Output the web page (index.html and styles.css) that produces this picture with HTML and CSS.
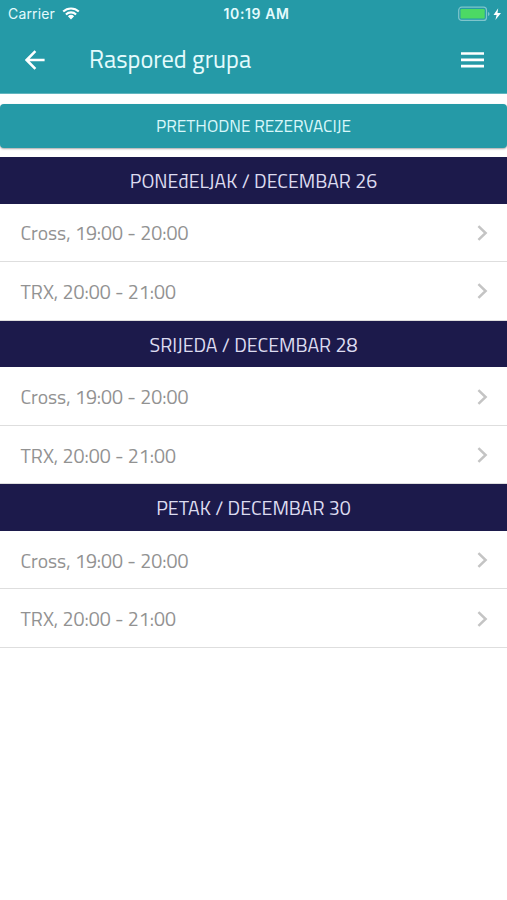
FILE: index.html
```html
<!DOCTYPE html>
<html lang="bs">
<head>
    <meta charset="UTF-8">
    <meta name="viewport" content="width=device-width, initial-scale=1.0">
    <title>Raspored grupa</title>
    <link rel="stylesheet" href="styles.css">
</head>
<body>
    <header>
        <div class="status">
            <div class="carrier">
                <span class="carrier-name">Carrier</span>
                <svg class="wifi" width="18" height="13" viewBox="0 0 18 13">
                    <path d="M1.2 4.6a11.3 11.3 0 0 1 15.6 0M3.9 7.4a7.4 7.4 0 0 1 10.2 0" fill="none" stroke="#fff" stroke-width="2.1"/>
                    <path d="M5.9 9.3a4.5 4.5 0 0 1 6.2 0L9 12.5z" fill="#fff"/>
                </svg>
            </div>
            <span class="time">10:19 AM</span>
            <svg class="battery" width="44" height="16" viewBox="0 0 44 16">
                <rect x="0.7" y="1.2" width="27.8" height="13.2" rx="3" fill="none" stroke="#7fc5cc" stroke-width="1.2"/>
                <rect x="2.5" y="3" width="24.2" height="9.6" rx="1.2" fill="#4cd964"/>
                <path d="M30 6v4q1.6-.6 1.6-2T30 6z" fill="#7fc5cc"/>
                <path d="M40.2 2.2 35.5 9h3.1l-1.2 5L43 7h-3.5z" fill="#fff"/>
            </svg>
        </div>
        <div class="bar">
            <svg class="back" width="20" height="20" viewBox="0 0 20 20">
                <path d="M19.6 10H2M10.4 1.1 1.6 10l8.8 8.9" fill="none" stroke="#fff" stroke-width="2.5"/>
            </svg>
            <h1>Raspored grupa</h1>
            <svg class="menu" width="23" height="16" viewBox="0 0 23 16">
                <path d="M0 1.5h23M0 7.9h23M0 14.1h23" stroke="#fff" stroke-width="2.6"/>
            </svg>
        </div>
    </header>
    <main>
        <button class="previous">PRETHODNE REZERVACIJE</button>
        <section>
            <h2>PONEđELJAK / DECEMBAR 26</h2>
            <ul>
                <li>Cross, 19:00 - 20:00<svg width="11" height="16" viewBox="0 0 11 16"><path d="M1.4 1.2 8.6 8l-7.2 6.8"/></svg></li>
                <li>TRX, 20:00 - 21:00<svg width="11" height="16" viewBox="0 0 11 16"><path d="M1.4 1.2 8.6 8l-7.2 6.8"/></svg></li>
            </ul>
        </section>
        <section>
            <h2>SRIJEDA / DECEMBAR 28</h2>
            <ul>
                <li>Cross, 19:00 - 20:00<svg width="11" height="16" viewBox="0 0 11 16"><path d="M1.4 1.2 8.6 8l-7.2 6.8"/></svg></li>
                <li>TRX, 20:00 - 21:00<svg width="11" height="16" viewBox="0 0 11 16"><path d="M1.4 1.2 8.6 8l-7.2 6.8"/></svg></li>
            </ul>
        </section>
        <section>
            <h2>PETAK / DECEMBAR 30</h2>
            <ul>
                <li>Cross, 19:00 - 20:00<svg width="11" height="16" viewBox="0 0 11 16"><path d="M1.4 1.2 8.6 8l-7.2 6.8"/></svg></li>
                <li>TRX, 20:00 - 21:00<svg width="11" height="16" viewBox="0 0 11 16"><path d="M1.4 1.2 8.6 8l-7.2 6.8"/></svg></li>
            </ul>
        </section>
    </main>
</body>
</html>
```
FILE: styles.css
```css
*{
    box-sizing: border-box;
    margin:0;
    padding:0;
}
body{
    background: #fff;
    font-family: "Titillium Web", Roboto, "Liberation Sans", sans-serif;
}
header{
    height: 94px;
    background: #259aa7;
    border-bottom: 1px solid #62b6bf;
    color: #e4fbfd;
}
.status{
    display: grid;
    grid-template-columns: 1fr auto 1fr;
    align-items: center;
    height: 27px;
    padding: 0 5px 0 8px;
    font-family: Inter, sans-serif;
    font-size: 14px;
}
.carrier{
    display: flex;
    align-items: center;
    gap: 7px;
}
.carrier-name{
    letter-spacing: 0.15px;
}
.time{
    margin-left: 3px;
    font-weight: 600;
    letter-spacing: 0.6px;
}
.battery{
    justify-self: end;
}
.bar{
    display: flex;
    align-items: center;
    height: 66px;
    padding: 0 23px 0 25px;
}
h1{
    margin-left: 44px;
    padding-bottom: 2px;
    font-size: 24.4px;
    font-weight: 400;
    line-height: 30px;
    white-space: nowrap;
}
.menu{
    margin-left: auto;
}
.previous{
    display: block;
    width: 100%;
    height: 44px;
    margin: 10px 0 9px;
    border: 0;
    border-radius: 4px;
    background: #259aa7;
    box-shadow: 0 1px 2px rgba(0,0,0,0.35);
    color: #d8f7fa;
    font-family: inherit;
    font-size: 17.2px;
}
section{
    height: 163.7px;
}
h2{
    height: 46.6px;
    background: #1c1a4b;
    color: #dddcf0;
    font-size: 19.6px;
    font-weight: 400;
    line-height: 49px;
    text-align: center;
}
ul{
    list-style: none;
}
li{
    display: flex;
    align-items: center;
    justify-content: space-between;
    height: 58.5px;
    padding: 2px 19px 0 20.5px;
    border-bottom: 1px solid #dedede;
    color: #929292;
    font-size: 19.6px;
}
li svg{
    margin-bottom: 1px;
    fill: none;
    stroke: #c4c4c4;
    stroke-width: 2.5;
}
```
